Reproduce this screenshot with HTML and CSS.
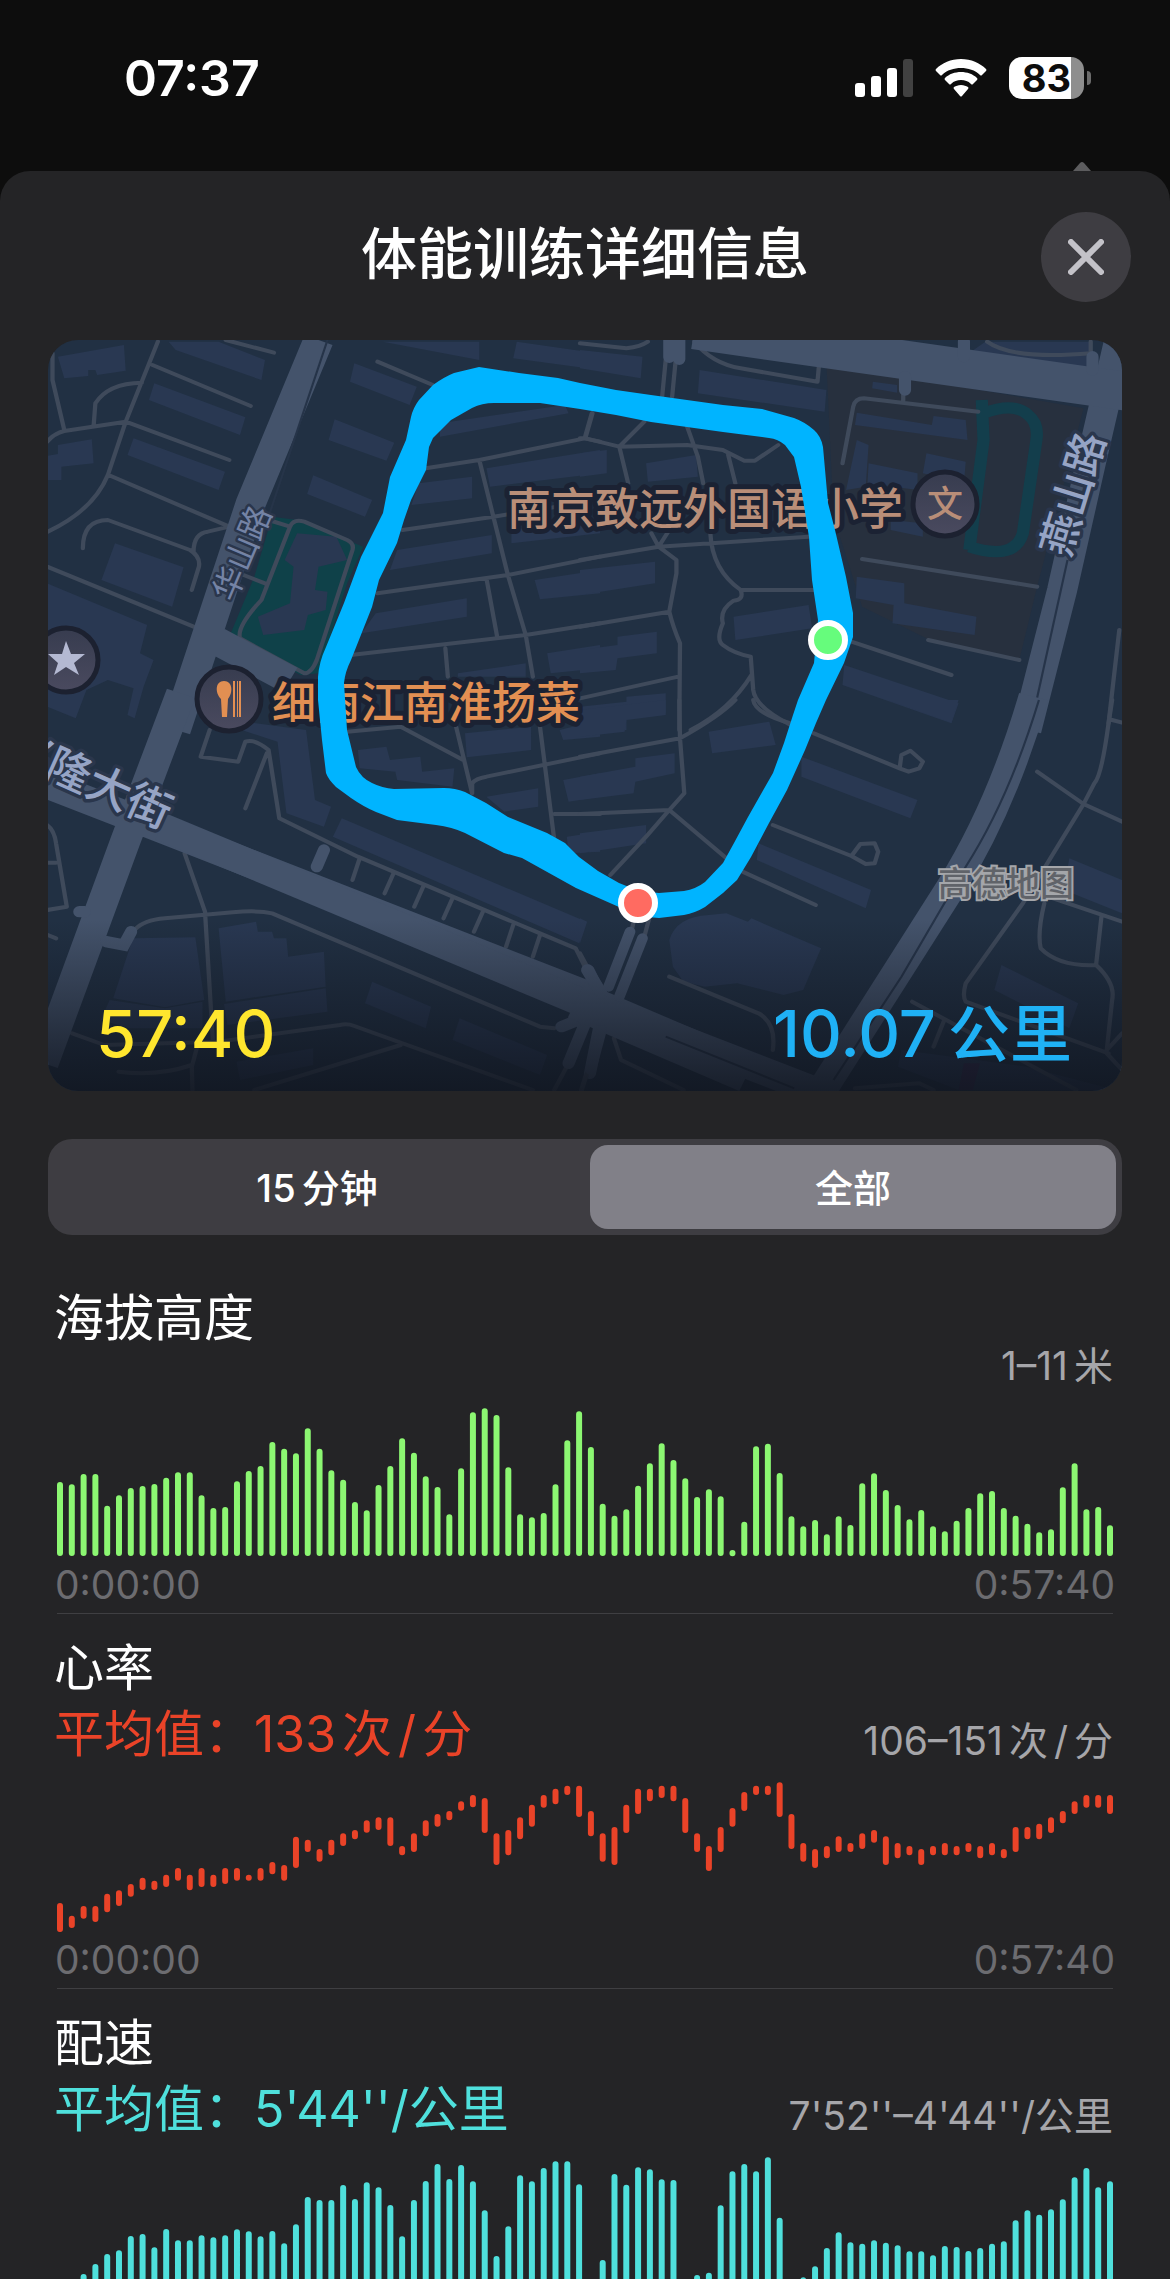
FILE: index.html
```html
<!DOCTYPE html>
<html lang="zh-CN">
<head>
<meta charset="utf-8">
<meta name="viewport" content="width=device-width">
<title>体能训练详细信息</title>
<link rel="stylesheet" href="styles.css">
</head>
<body>
<header class="status">
  <time class="clock">07:37</time>
  <div class="status-icons">
    <svg class="signal" viewBox="0 0 58 38" aria-label="信号">
      <rect x="0" y="24" width="10" height="14" rx="3"/>
      <rect x="16" y="17" width="10" height="21" rx="3"/>
      <rect x="32" y="9" width="10" height="29" rx="3"/>
      <rect class="faint" x="48" y="0" width="10" height="38" rx="3"/>
    </svg>
    <svg class="wifi" viewBox="0 0 52 38" aria-label="Wi-Fi">
      <path d="M26 0C16 0 7 4 1 10q-1 1 0 2l4 4q1 1 2 0c5-5 12-7 19-7s14 2 19 7q1 1 2 0l4-4q1-1 0-2C45 4 36 0 26 0z"/>
      <path d="M26 13c-6 0-12 2-16 6q-1 1 0 2l4 4q1 1 2 0c3-3 6-4 10-4s7 1 10 4q1 1 2 0l4-4q1-1 0-2c-4-4-10-6-16-6z"/>
      <path d="M26 26c-3 0-5 1-7 2q-1 1 0 2l6 7q1 1 2 0l6-7q1-1 0-2c-2-1-4-2-7-2z"/>
    </svg>
    <div class="battery"><span class="battery-level">83</span></div>
  </div>
  <svg class="peek" viewBox="0 0 18 9" aria-hidden="true"><path d="M0 9 7 1q2-2 4 0l7 8z"/></svg>
</header>

<main class="sheet">
  <div class="sheet-head">
    <h1>体能训练详细信息</h1>
    <button class="close" type="button" aria-label="关闭">
      <svg viewBox="0 0 36 36"><path d="M3 3 33 33M33 3 3 33"/></svg>
    </button>
  </div>

  <section class="map">
    <svg class="map-art" viewBox="48 340 1074 751" role="img" aria-label="路线地图">
      <defs>
        <linearGradient id="shade" x1="0" y1="0" x2="0" y2="1">
          <stop offset="0" stop-color="#10151f" stop-opacity="0"/>
          <stop offset="1" stop-color="#10151f" stop-opacity=".85"/>
        </linearGradient>
        <linearGradient id="pin" x1="0" y1="0" x2="0" y2="1">
          <stop offset="0" stop-color="#373c4f"/>
          <stop offset="1" stop-color="#4a4a5f"/>
        </linearGradient>
      </defs>
      <rect class="land" x="48" y="340" width="1074" height="751"/>

      <!-- north-west tile -->
      <svg class="tile" x="40" y="330" width="560" height="400" viewBox="0 0 1568 1200" preserveAspectRatio="none">
        <path class="park" d="M650 560 720 570 905 650 860 760 780 1030 730 1035 530 920 600 740z"/>
        <path class="block" d="M50 80 235 45 240 122 160 135 155 120 135 120 135 138 68 145zM360 35 500 35 630 90 620 150 380 60zM320 160 575 262 560 315 305 210zM262 325 518 425 500 480 245 375zM50 345 145 328 150 400 60 410 60 450 20 450 20 378 50 372zM210 640 402 712 370 830 172 750zM20 760 300 885 280 970 318 990 290 1070 265 1165 245 1155 262 1075 190 1050 130 1080 100 1165 20 1130zM880 100 1055 170 1035 225 868 155zM825 268 992 338 970 392 808 330zM765 436 930 510 910 560 748 492zM960 35 1230 35 1230 90zM1335 35 1560 70 1568 120 1325 85zM1120 280 1470 225 1480 250 1120 320zM1060 460 1210 440 1210 505 1040 525zM1250 415 1568 360V430L1260 470zM1000 660 1265 615V670L980 720zM1320 600 1568 560V610L1320 640zM940 850 1195 805V860L900 910zM1385 750 1568 720V790L1400 808zM1420 970 1568 945V1015L1430 1030zM1170 1030 1360 1000V1040H1170zM720 610 830 620 860 690 780 710 770 780 805 785 800 840 750 855 740 900 625 915 610 860 700 820 710 710 685 690z"/>
        <path class="lane" d="M330 35 240 275 190 435Q150 540 22 605M35 70 35 150 68 300M20 335Q40 310 68 303L240 275 530 390M150 290 155 220Q190 160 285 158M315 105 590 228M520 30 655 68M192 435 530 590 470 605Q430 610 430 665M120 655Q120 570 190 570L420 660Q450 680 445 710L425 780M20 710 430 890M945 95 1100 165M1080 415 1230 390 1525 325 1545 250M1230 390 1310 735 1360 915 1380 1040M1015 600 1270 560 1568 510M945 790 1310 735 1568 680M1250 745 1280 920M870 975 1360 915 1568 880M1135 955 1142 1040M1525 325 1568 335M640 570 700 590 620 810Q550 890 560 925L740 1030Q760 1030 775 990L875 660Q880 640 860 630L740 575Q710 565 700 590M570 735 630 760"/>
        <path class="road" d="M780 30 590 520 380 1200M490 930 700 1050"/>
        <path class="edge" d="M805 30 640 560"/>
      </svg>

      <!-- north-east tile -->
      <svg class="tile" x="580" y="330" width="560" height="400" viewBox="0 0 1568 1200" preserveAspectRatio="none">
        <path class="school" d="M690 100 1410 235 1280 770 1230 990 980 930 790 830 710 560z"/>
        <path class="block" d="M0 60 175 80 170 145 0 115zM335 120 690 180 685 245 330 190zM775 248 985 285 990 258 1080 270 1085 330 770 285zM775 330 808 345 800 470 745 480zM808 400 945 430 945 480 805 460zM970 370 1080 395 1075 460 960 430zM0 370 75 360V430L0 440zM185 400 325 375 330 440 190 455zM0 720 210 695V760L0 795zM0 960 105 945V920L215 905V970L105 985 100 1020 0 1030zM0 1130 130 1115V1100L240 1090V1150L130 1165 130 1200H0zM430 860 640 825 650 895 435 930zM775 740 908 760 908 820 1110 860 1105 915 875 880 878 825 772 805zM740 1005 1060 1120 1040 1180 735 1065zM820 155 888 165V188L818 175zM870 570 960 580V620L870 600zM1135 35H1430V115L1095 65z"/>
        <path class="track" d="M1130 250Q1215 215 1255 255 1285 280 1278 330L1240 610Q1225 665 1165 665 1130 665 1090 650M1125 210 1130 330 1090 660"/>
        <path class="lane" d="M320 35Q370 100 450 115L665 155 670 95M0 40 130 55Q170 50 190 35M240 90 230 200M268 90 258 200M35 250 15 325 110 350 300 345 400 360 460 392H490L555 345M110 350 180 275M110 350 135 460M300 290 330 380 345 460M415 375 435 460M0 325 15 325M735 400 765 230Q770 205 795 205L1115 245M905 180V215M0 690 220 650 640 620M200 610 220 650 270 690 270 730 250 845Q260 890 280 940L278 1200M220 650 250 600M365 610Q370 720 450 780 460 810 430 812 390 840 400 880 380 930 400 945 430 970 478 980L485 1080Q490 1130 590 1185M450 780H660M0 890 250 845M0 1105 275 1040M480 1035Q420 1140 310 1200M760 935 1040 1035M975 930 1230 990M790 687 1280 770M1510 900 1480 1180M1140 35Q1210 90 1430 70L1430 35"/>
        <path class="road" d="M1510 30 1430 400 1350 780 1250 1200"/>
        <path class="avenue" d="M320 0 1568 190"/>
        <path class="stub" d="M250 30V82M278 30V88M1075 35V80M910 140V180M1435 80V120"/>
        <path class="edge" d="M1365 690 1260 1200"/>
      </svg>

      <!-- south-west tile -->
      <svg class="tile" x="40" y="700" width="560" height="400" viewBox="0 0 1568 1200" preserveAspectRatio="none">
        <path class="block" d="M540 60 745 90 770 300 815 320 795 380 690 340 665 125 550 85zM845 355 1530 665 1510 730 820 410zM890 150 970 140 980 180 1065 170 1070 215 1160 205 1155 260 1000 240 995 215 895 205zM1190 100 1375 80V150L1195 172zM1250 290 1395 265V320L1300 335zM1465 240 1568 220V290L1480 305zM1475 410 1568 395V455L1480 460zM260 715 435 712 460 900 350 922 205 895zM500 685 605 665 610 695 650 695 655 715H690L695 770 795 755 800 860 520 905zM515 912 800 865 805 935 525 975zM195 900 350 925 455 905V985H250L170 960zM930 845 1095 920 1080 985 910 910zM1175 955 1420 1065 1400 1125 1155 1020zM550 1085 765 1045V1095L560 1140zM1455 90 1568 60V110L1465 120z"/>
        <path class="lane" d="M475 90 450 170 555 185 575 125Q600 115 640 150L670 355 890 470 1400 700 1500 745 1530 810M635 160 575 325M20 375Q40 390 45 430L75 620 20 630M20 488H45M22 705 45 715M405 460 462 635 485 1040M265 690Q290 660 350 655L540 637Q610 630 650 640L1400 980 1440 985M895 475 875 540M990 520 965 580M1075 555 1048 620M1155 595 1130 655M1240 635 1215 695M1325 675 1305 740M1400 705 1380 770M90 1000 180 1035 500 1025 840 975Q860 970 880 978L1380 1170M1010 1035 600 1170M440 1040 425 1100 427 1170M220 1115Q330 1130 425 1095M860 95 1010 80 1185 180M1165 80 1210 280M1400 80 1440 420M1210 280 1210 250Q1220 235 1250 230L1568 160M1440 342H1568M1475 1100 1440 1170M1530 1120 1515 1170"/>
        <path class="road" d="M395 -20 240 420 10 1090M0 245 300 370 1568 900"/>
        <path class="road" d="M340 380 1568 930"/>
        <path class="stub" d="M795 450 775 500M110 635H125M255 695 235 735 185 725M1535 810 1568 880M1460 980 1530 950M1530 960 1480 1090M1568 970 1540 1120"/>
      </svg>

      <!-- south-east tile -->
      <svg class="tile" x="580" y="700" width="560" height="400" viewBox="0 0 1568 1200" preserveAspectRatio="none">
        <path class="block" d="M0 30 240 0V45L130 60 125 95 0 110zM360 95 530 65 548 135 370 160zM0 230 155 200V175L265 160V220L155 245 150 280 0 300zM0 400 185 375V430L0 460zM620 170 945 300 925 355 620 230zM500 430 815 570 800 625 495 480zM860 0 1060 0 1040 68zM1370 475 1518 540V640L1355 570zM1180 795 1395 910 1370 985 1160 870zM250 720Q270 650 360 645L410 640 470 665 480 655 675 745 625 870 570 885 440 850 350 860 290 845 260 800zM900 1050 1250 1100 1500 1170H1060L890 1100zM0 655 20 665 0 730z"/>
        <path class="lane" d="M278 0 280 115 292 280 250 330 185 410 85 525M0 170 280 115Q390 50 435 0M0 342 250 330 410 475M485 0Q490 40 590 70M655 100 895 205 900 165 925 152 960 185 950 205 920 215 895 205M540 375 760 468 785 432 825 430 835 455 825 490 800 492 760 468M455 515 660 615M1490 0 1480 70Q1460 230 1440 250L1410 312 1240 610 1080 850Q1070 890 1080 905L1480 1060M1280 215 1410 312 1518 365M1490 60 1518 68M1310 590 1518 665M1300 610Q1280 700 1290 745 1340 800 1445 795L1460 650M1445 795Q1500 850 1490 900L1475 1050 1518 1000M1475 1060 1518 1110M930 905 1390 1170M1020 960 990 1040M250 830 500 940Q550 970 540 1050M95 1015 115 1080 290 1170M770 1165 950 1150 990 1170M150 665 145 690M195 650 180 710M0 760 20 800M20 1120 5 1170"/>
        <path class="road" d="M1270 -10Q1180 320 1040 560L660 1200M0 900 700 1190"/>
        <path class="avenue" d="M-10 900 470 1120"/>
        <path class="narrow" d="M140 695 80 860M175 715 110 890M60 990 30 1110"/>
        <path class="stub" d="M20 810 60 880"/>
        <path class="edge" d="M1285 0Q1200 300 1080 500L900 830 710 1140M240 1010 600 1165"/>
        <path class="line" d="M1060 1170 1075 1090 1120 1090 1100 1170z"/>
      </svg>

      <g class="place road-name">
        <text x="0" y="12" font-size="33" transform="translate(242 553) rotate(-67)">华山路</text>
      </g>
      <g class="place road-name bright">
        <text x="0" y="15" font-size="42" transform="translate(1073 494) rotate(-73)">燕山路</text>
        <text x="0" y="15" font-size="44" transform="translate(89 780) rotate(24)">兴隆大街</text>
      </g>
      <g class="pins">
        <circle cx="66" cy="660" r="32"/><circle cx="229" cy="699" r="32"/><circle cx="945" cy="504" r="32"/>
      </g>
      <path class="star" d="M66 641 71 654H85L74 663 79 675 66 667 54 675 58 663 48 654H62z"/>
      <path class="cutlery" d="M224 681c-9 0-9 12-3 18l1 18h5l1-18c5-6 5-18-4-18zM233 681h2v36h-2zM237 681h1v36h-1zM239 681h2v36h-2z"/>
      <text class="place school-name glyph" x="945" y="517" font-size="36">文</text>
      <text class="place school-name" x="507" y="525" font-size="44">南京致远外国语小学</text>
      <text class="place food-name" x="272" y="719" font-size="44">细雨江南淮扬菜</text>
      <text class="credit" x="938" y="896" font-size="34">高德地图</text>

      <rect x="48" y="920" width="1074" height="171" fill="url(#shade)"/>
      <path class="route" fill-rule="evenodd" d="M479 367 454 373Q444 377 433 385L419 400Q413 408 411 417L406 440 390 477 383 513 361 557 344 603 326 647Q319 662 318 677V700L322 740 326 773Q328 779 336 787L351 798Q364 807 376 812L397 820 436 825Q452 827 465 833L504 853 522 858 576 888 619 907Q639 918 659 918L684 915Q695 913 705 907L723 893 737 880 751 857 769 823 787 790 805 750 816 723 826 700 844 663 853 637V613L846 577 835 530 828 503 823 447Q821 436 814 430 805 422 794 418L762 409 723 405 651 395 616 390 580 383 558 378 519 373zM494 403Q482 403 472 408L451 420 433 438 429 447 426 470 411 500 404 520 397 543 379 580 372 607 351 660Q345 672 344 683L347 730 356 767Q361 778 372 783 382 788 394 789L444 788Q455 788 465 792L486 803 508 817 547 833 565 843 579 857 598 871 619 883Q639 892 659 893L684 891Q696 889 705 882L723 863 734 843 748 817 773 773 784 743 793 715 798 700 814 663 818 620 812 580 809 537 801 487 794 457 785 445Q778 439 769 438L723 432 651 422 616 415 580 409 540 403z"/>
      <g class="ends">
        <circle class="start" cx="828" cy="640" r="17"/>
        <circle class="finish" cx="638" cy="903" r="17"/>
      </g>
    </svg>
    <div class="map-stats">
      <span class="duration">57:40</span>
      <span class="distance">10.07<span class="unit">公里</span></span>
    </div>
  </section>

  <div class="segments" role="group" aria-label="时间范围">
    <button type="button" aria-pressed="false">15<span class="gap">分钟</span></button>
    <button type="button" aria-pressed="true" class="selected">全部</button>
  </div>

  <section class="metric">
    <h2>海拔高度</h2>
    <div class="summary"><span></span><span class="range">1–11<span class="gap">米</span></span></div>
    <svg class="chart green" data-series="elevation" viewBox="57 0 1056 150"></svg>
    <div class="axis"><span>0:00:00</span><span>0:57:40</span></div>
  </section>

  <section class="metric red">
    <h2>心率</h2>
    <div class="summary"><span class="average">平均值：133<span class="gap">次<span class="slash">/</span>分</span></span><span class="range">106–151<span class="gap">次<span class="slash">/</span>分</span></span></div>
    <svg class="chart" data-series="heart" viewBox="57 0 1056 150"></svg>
    <div class="axis"><span>0:00:00</span><span>0:57:40</span></div>
  </section>

  <section class="metric cyan">
    <h2>配速</h2>
    <div class="summary"><span class="average">平均值：5'44''/公里</span><span class="range">7'52''–4'44''/公里</span></div>
    <svg class="chart" data-series="pace" viewBox="57 0 1056 150"></svg>
    <div class="axis"><span>0:00:00</span><span>0:57:40</span></div>
  </section>
</main>
<script src="charts.js"></script>
</body>
</html>
```
FILE: styles.css
```css
* { box-sizing: border-box; }

body {
  margin: 0;
  height: 100vh;
  overflow: hidden;
  display: flex;
  flex-direction: column;
  background: #0d0d0d;
  color: #fff;
  font-family: Inter, "Noto Sans CJK SC", sans-serif;
}

button {
  border: 0;
  padding: 0;
  margin: 0;
  font: inherit;
  color: inherit;
}

.status {
  position: relative;
  height: 171px;
  flex: none;
  display: flex;
  justify-content: space-between;
  align-items: flex-start;
  padding: 47px 78px 0 124px;
}
.clock { font-size: 50px; line-height: 62px; font-weight: 600; }
.status-icons { display: flex; align-items: center; gap: 22px; padding-top: 10px; }
.signal { width: 58px; height: 38px; fill: #fff; }
.signal .faint { fill: #414141; }
.wifi { width: 52px; height: 38px; fill: #fff; }
.battery {
  position: relative;
  width: 75px;
  height: 42px;
  margin-right: 8px;
  border-radius: 13px;
  background: linear-gradient(to right, #fff 83%, #8e8e8e 83%);
}
.battery::after {
  content: "";
  position: absolute;
  left: 78px;
  top: 14px;
  width: 4px;
  height: 14px;
  border-radius: 0 4px 4px 0;
  background: #6c6c6c;
}
.battery-level {
  display: block;
  width: 75px;
  text-align: center;
  font-size: 38px;
  line-height: 42px;
  font-weight: 700;
  color: #0d0d0d;
}
.peek { position: absolute; right: 79px; bottom: 0; width: 18px; height: 9px; fill: #5c5c5e; }

.sheet {
  flex: 1;
  min-height: 0;
  overflow: hidden;
  border-radius: 30px 30px 0 0;
  background: #242426;
  padding: 0 48px;
}
.sheet-head { position: relative; height: 169px; padding-top: 43px; }
h1 { margin: 0; text-align: center; font-size: 56px; line-height: 80px; font-weight: 500; }
.close {
  position: absolute;
  top: 41px;
  right: -9px;
  width: 90px;
  height: 90px;
  border-radius: 50%;
  background: #3e3d42;
  display: grid;
  place-items: center;
}
.close svg { width: 36px; height: 36px; fill: none; stroke: #c3c2c8; stroke-width: 6; stroke-linecap: round; }

.map { position: relative; border-radius: 30px; overflow: hidden; }
.map-art { display: block; width: 100%; }
.tile { overflow: visible; }
.land { fill: #213043; }
.park { fill: #0f4149; }
.school { fill: #27303e; }
.block { fill: #293852; }
.line { fill: #33284a; }
.track { fill: none; stroke: #133e4c; stroke-width: 34; }
.lane { fill: none; stroke: #3f4a5b; stroke-width: 12; stroke-linejoin: round; stroke-linecap: round; }
.road { fill: none; stroke: #44536b; stroke-width: 84; }
.avenue { fill: none; stroke: #44536b; stroke-width: 116; }
.stub { fill: none; stroke: #44536b; stroke-width: 34; stroke-linecap: round; }
.narrow { fill: none; stroke: #44536b; stroke-width: 30; stroke-linecap: round; }
.edge { fill: none; stroke: #263449; stroke-width: 6; }
.place { font-weight: 500; stroke: #1b2233; stroke-width: 10; stroke-linejoin: round; paint-order: stroke; }
.road-name { text-anchor: middle; fill: #7483a5; font-weight: 400; stroke: #2a364c; stroke-width: 5; }
.road-name.bright { fill: #96a4c5; font-weight: 500; stroke-width: 7; }
.school-name { fill: #b98e78; }
.food-name { fill: #e28f52; }
.glyph { text-anchor: middle; stroke: none; }
.pins { fill: url(#pin); stroke: #1c2130; stroke-width: 5; }
.star { fill: #b4b9d2; }
.cutlery { fill: #e28f52; }
.credit { fill: #606369; stroke: #a4a6aa; stroke-width: 4; paint-order: stroke; font-weight: 500; }
.route { fill: #00b4ff; }
.ends { stroke: #fff; stroke-width: 6; }
.start { fill: #66fc7c; }
.finish { fill: #ff6b61; }

.map-stats {
  position: absolute;
  left: 48px;
  right: 50px;
  bottom: 16px;
  display: flex;
  justify-content: space-between;
  font-size: 65px;
  line-height: 80px;
  font-weight: 500;
}
.duration { color: #ffe62e; }
.distance { color: #1fb1f5; }
.unit { font-size: 62px; margin-left: 12px; }

.segments {
  display: grid;
  grid-template-columns: 1fr 1fr;
  gap: 10px;
  height: 96px;
  margin-top: 48px;
  padding: 6px;
  border-radius: 24px;
  background: #3e3d42;
}
.segments button {
  padding-bottom: 4px;
  border-radius: 18px;
  background: none;
  font-size: 38px;
  font-weight: 500;
}
.segments .selected { background: #818088; }
.gap { margin-left: 6px; }
.slash { margin: 0 6px; }

.metric { margin: 0 9px; border-bottom: 1px solid #3f3f42; }
.segments + .metric { margin-top: 29px; }
h2 { margin: 0 0 0 -3px; padding-top: 30px; font-size: 50px; line-height: 48px; font-weight: 400; }
.summary { display: flex; justify-content: space-between; align-items: flex-end; margin-bottom: 17px; }
.average { margin: 11px 0 0 -3px; font-size: 50px; line-height: 62px; }
.range { font-size: 39px; line-height: 48px; color: #a6a6aa; }
.chart { display: block; width: 100%; fill: none; stroke: currentColor; stroke-width: 6; stroke-linecap: round; }
.axis { display: flex; justify-content: space-between; margin: 0 -2px; padding: 6px 0; font-size: 39px; line-height: 44px; color: #6c6c70; }
.green { color: #8cf772; }
.red .average, .red .chart { color: #ea4328; }
.cyan .average, .cyan .chart { color: #4fe0dc; }
```
FILE: charts.js
```js
// Bar heights from the baseline; heart rate uses [top, bottom] pairs. Units are thirds of a chart pixel.
const elevation = [222,215,246,246,151,182,204,210,216,235,251,251,182,144,147,224,255,270,342,322,308,383,322,257,229,162,137,213,270,353,310,239,207,125,263,431,443,423,266,125,116,129,215,347,434,327,157,121,140,211,278,338,288,233,177,200,179,17,103,329,337,249,119,89,108,65,119,93,218,248,198,153,110,138,89,74,106,144,188,195,144,121,97,71,80,206,278,140,147,92];

const heart = [[849,936],[887,924],[858,896],[858,906],[821,877],[811,858],[792,830],[773,810],[782,810],[764,801],[744,782],[764,811],[744,801],[764,801],[744,792],[744,782],[764,782],[744,782],[726,763],[735,782],[650,744],[659,696],[687,725],[659,706],[640,678],[630,658],[601,638],[592,630],[592,678],[678,706],[640,696],[601,649],[582,620],[573,601],[544,572],[525,562],[534,639],[640,735],[630,706],[592,658],[554,620],[525,563],[506,553],[497,525],[497,591],[573,649],[640,725],[621,735],[554,639],[506,582],[506,544],[497,534],[497,544],[534,639],[640,696],[678,753],[621,696],[564,620],[516,573],[497,525],[497,525],[487,591],[582,687],[669,725],[687,744],[678,715],[649,696],[669,696],[640,687],[630,668],[649,735],[669,715],[678,706],[687,735],[678,706],[669,706],[678,706],[669,696],[678,715],[669,706],[687,715],[621,696],[621,658],[611,658],[592,639],[573,610],[544,582],[525,563],[525,563],[525,582]];

const pace = [18,40,99,129,159,170,213,219,179,234,200,200,215,209,215,233,227,212,228,191,248,330,321,321,366,324,374,359,306,212,321,378,429,384,426,377,290,153,242,395,377,417,437,437,368,60,141,399,367,419,413,383,381,50,96,103,305,407,429,407,449,268,50,89,122,177,224,194,190,200,193,185,167,167,155,183,180,168,177,190,197,260,290,277,293,323,389,417,359,377];

const spans = {
  elevation: elevation.map(h => [149 - h / 3, 149]),
  heart: heart.map(([top, bottom]) => [(top - 486) / 3, (bottom - 486) / 3]),
  pace: pace.map(h => [150 - h / 3, 150]),
};

for (const chart of document.querySelectorAll(".chart")) {
  const bars = spans[chart.dataset.series];
  const step = 1050 / (bars.length - 1);
  const path = document.createElementNS("http://www.w3.org/2000/svg", "path");
  path.setAttribute("d", bars.map(([top, bottom], i) =>
    `M${(60 + i * step).toFixed(2)} ${(top + 3).toFixed(2)}V${(bottom - 2.99).toFixed(2)}`).join(""));
  chart.append(path);
}
```
